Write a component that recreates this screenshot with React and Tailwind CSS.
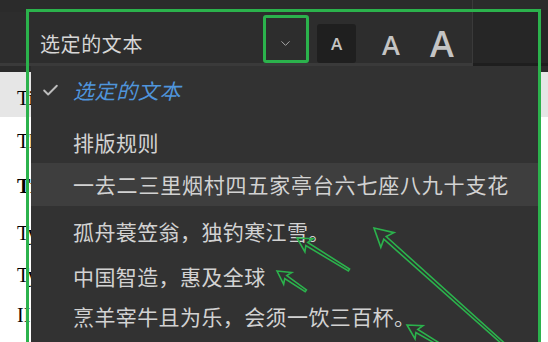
import React from 'react';
import {ChevronDown, Check} from "lucide-react";

const cjk = {fontFamily: '"Noto Sans CJK SC", "Noto Sans", sans-serif'};
const sans = {fontFamily: '"Open Sans", "Liberation Sans", Arial, sans-serif'};

const Arrow = ({x, y, angle, length, head = 15}) => (
    <g transform={`translate(${x} ${y}) rotate(${angle})`}>
        <polygon
            points={`0,0 ${head},${-head * 0.55} ${head * 0.82},-1.8 ${length},-1.1 ${length},1.1 ${head * 0.82},1.8 ${head},${head * 0.55}`}
            fill="none"
            stroke="#2bb24c"
            strokeWidth="1.6"
            strokeLinejoin="miter"
        />
    </g>
);

// document lines peeking out behind the menu
const docLines = [
    {text: "Ti", bg: "bg-[#e6e6e6]", h: "h-[45px]"},
    {text: "Th", bg: "bg-white", h: "h-[42px]"},
    {text: "Ti", bg: "bg-white", h: "h-[47px]", bold: true},
    {text: "Ty", bg: "bg-white", h: "h-[47px]"},
    {text: "Ty", bg: "bg-white", h: "h-[38px]"},
    {text: "II", bg: "bg-white", h: "h-[42px]"},
];

const App = () => {
    return (
        <div className="relative w-[548px] h-[342px] overflow-hidden bg-white">
            {/* top toolbar */}
            <div className="flex h-[72px] bg-[#2b2b2b]">
                <div className="flex flex-1 flex-col">
                    <div className="h-[12px]" />
                    <div className="flex h-[51px] items-end pb-[9px] pl-[40px] bg-[#2d2d2d]">
                        <span className="w-[225px] text-[20px] text-[#d6d6d6] leading-none tracking-[0.6px]" style={cjk}>选定的文本</span>
                        <div className="flex h-[22px] w-[40px] items-center justify-center">
                            <ChevronDown size={15} color="#a8a8a8" strokeWidth={1.6} />
                        </div>
                        <div className="ml-[12px] -mb-[9px] flex h-[39px] w-[39px] items-center justify-center rounded-[3px] bg-[#1f1f1f]">
                            <span className="text-[17px] font-semibold leading-none text-[#c4c4c4]" style={sans}>A</span>
                        </div>
                        <div className="ml-[25px] -mb-[4px] flex w-[20px] items-end justify-center">
                            <span className="text-[27px] font-semibold leading-none text-[#c4c4c4]" style={sans}>A</span>
                        </div>
                        <div className="ml-[26px] -mb-[8px] flex w-[30px] items-end justify-center">
                            <span className="text-[36px] font-semibold leading-none text-[#c4c4c4]" style={sans}>A</span>
                        </div>
                    </div>
                    <div className="h-[3px] bg-[#3a3a3a]" />
                </div>
                <div className="w-[76px] border-l border-[#3a3a3a] flex flex-col">
                    <div className="h-[10px] bg-[#2b2b2b]" />
                    <div className="h-[53px] bg-[#262626]" />
                    <div className="h-[3px] bg-[#1e1e1e]" />
                </div>
            </div>

            {/* document behind */}
            <div className="flex flex-col">
                {docLines.map((line, i) => (
                    <div key={i} className={`${line.h} ${line.bg} flex items-center pl-[17px] pt-[6px]`}>
                        <span className={`text-[20px] text-black whitespace-nowrap ${line.bold ? "font-bold" : ""}`} style={{fontFamily: '"Liberation Serif", "Times New Roman", serif'}}>{line.text}</span>
                    </div>
                ))}
            </div>

            {/* dropdown menu */}
            <div className="absolute left-[31px] top-[66px] w-[507px] h-[280px] bg-[#323232] text-[#d2d2d2]" style={cjk}>
                <div className="flex h-[48px] items-center pl-[10px]">
                    <Check size={19} color="#bdbdbd" strokeWidth={2.4} />
                    <span className="ml-[13px] text-[21px] italic text-[#4f95dc] leading-none tracking-[0.6px]">选定的文本</span>
                </div>
                <div className="flex h-[49px] items-center pl-[42px] pt-[8px]">
                    <span className="text-[21px] leading-none tracking-[0.5px]">排版规则</span>
                </div>
                <div className="flex h-[43px] items-center pl-[42px] bg-[#3e3e3e]">
                    <span className="text-[21px] leading-none tracking-[0.8px] whitespace-nowrap">一去二三里烟村四五家亭台六七座八九十支花</span>
                </div>
                <div className="flex h-[50px] items-center pl-[42px]">
                    <span className="text-[21px] leading-none tracking-[0.4px]">孤舟蓑笠翁，独钓寒江雪。</span>
                </div>
                <div className="flex h-[40px] items-center pl-[42px]">
                    <span className="text-[21px] leading-none tracking-[0.4px]">中国智造，惠及全球</span>
                </div>
                <div className="flex h-[40px] items-center pl-[42px]">
                    <span className="text-[21px] leading-none tracking-[0.4px]">烹羊宰牛且为乐，会须一饮三百杯。</span>
                </div>
            </div>

            {/* green annotation frames */}
            <div className="pointer-events-none absolute left-[26px] top-[9px] w-[515px] h-[345px] border-[3px] border-[#2bb24c]" />
            <div className="pointer-events-none absolute left-[263px] top-[15px] w-[46px] h-[48px] rounded-[3px] border-[3px] border-[#2bb24c]" />

            <svg className="pointer-events-none absolute left-0 top-0" width="548" height="342">
                <Arrow x={297} y={238} angle={31.6} length={61} head={14} />
                <Arrow x={277} y={271} angle={34.6} length={35} head={13} />
                <Arrow x={374} y={228} angle={41.8} length={200} head={18} />
                <Arrow x={407} y={325} angle={31} length={45} head={14} />
            </svg>
        </div>
    );
};

export default App;
